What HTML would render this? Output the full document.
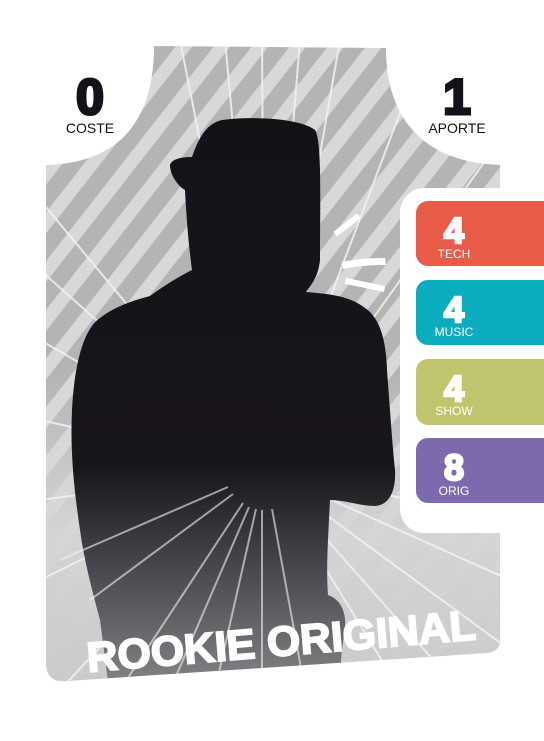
<!DOCTYPE html>
<html><head><meta charset="utf-8"><style>
html,body{margin:0;padding:0;background:#fff;width:544px;height:741px;overflow:hidden}
svg{display:block}
text{font-family:"Liberation Sans","DejaVu Sans",sans-serif}
</style></head><body>
<svg width="544" height="741" viewBox="0 0 544 741" xmlns="http://www.w3.org/2000/svg">
<defs>
<clipPath id="card">
<path d="M154,46 L386,48 C386,115 420,162 500,165 L500,640 Q500,652 486,653 L66,681 Q46,683 46,662 L46,165 C120,163 154,120 154,46 Z"/>
</clipPath>
<pattern id="stripes" patternUnits="userSpaceOnUse" width="30" height="30" patternTransform="rotate(38)">
<rect width="30" height="30" fill="#d8d8d8"/>
<rect width="17" height="30" fill="#b4b4b4"/>
</pattern>
<linearGradient id="fade" x1="0" y1="0" x2="0" y2="1">
<stop offset="0" stop-color="#d8d8d8" stop-opacity="0"/>
<stop offset="0.5" stop-color="#d8d8d8" stop-opacity="0"/>
<stop offset="0.72" stop-color="#d6d6d6" stop-opacity="0.95"/>
<stop offset="1" stop-color="#c6c6c6" stop-opacity="1"/>
</linearGradient>
<linearGradient id="body" x1="0" y1="0" x2="0" y2="1">
<stop offset="0" stop-color="#141118"/>
<stop offset="0.6" stop-color="#18151b"/>
<stop offset="1" stop-color="#8a898e"/>
</linearGradient>
</defs>
<g clip-path="url(#card)">
<rect x="0" y="0" width="544" height="741" fill="url(#stripes)"/>
<rect x="0" y="0" width="544" height="741" fill="url(#fade)"/>
<g stroke="#f2f2f2" stroke-width="2" opacity="0.85">
<line x1="265" y1="470" x2="180" y2="40"/>
<line x1="265" y1="470" x2="225" y2="40"/>
<line x1="265" y1="470" x2="262" y2="40"/>
<line x1="265" y1="470" x2="300" y2="40"/>
<line x1="265" y1="470" x2="340" y2="40"/>
<line x1="265" y1="470" x2="420" y2="60"/>
<line x1="265" y1="470" x2="500" y2="140"/>
<line x1="265" y1="470" x2="40" y2="200"/>
<line x1="265" y1="470" x2="40" y2="270"/>
<line x1="265" y1="470" x2="40" y2="340"/>
<line x1="265" y1="470" x2="40" y2="420"/>
<line x1="265" y1="470" x2="40" y2="500"/>
<line x1="265" y1="470" x2="40" y2="580"/>
<line x1="265" y1="470" x2="60" y2="690"/>
<line x1="265" y1="470" x2="120" y2="690"/>
<line x1="265" y1="470" x2="170" y2="690"/>
<line x1="265" y1="470" x2="215" y2="690"/>
<line x1="265" y1="470" x2="262" y2="690"/>
<line x1="265" y1="470" x2="305" y2="690"/>
<line x1="265" y1="470" x2="350" y2="690"/>
<line x1="265" y1="470" x2="400" y2="690"/>
<line x1="265" y1="470" x2="460" y2="690"/>
<line x1="265" y1="470" x2="510" y2="650"/>
<line x1="265" y1="470" x2="510" y2="580"/>
<line x1="265" y1="470" x2="510" y2="520"/>
</g>
<path fill="url(#body)" d="M222,120 C250,116 300,118 315,130 C322,140 320,200 320,260 C318,280 308,288 306,292 C330,294 350,296 365,308 C380,318 386,340 387,370 C390,410 392,440 395,470 C396,490 390,505 375,506 C360,506 345,500 330,500 C328,540 326,570 328,595 C342,600 348,615 344,635 C340,660 340,680 340,700 L110,700 C108,680 104,650 100,620 C92,590 84,560 80,530 C74,490 70,450 72,410 C74,370 82,330 100,318 C115,306 135,300 150,296 C165,285 180,276 192,270 C188,240 186,210 185,190 C178,186 170,175 170,165 C172,158 185,157 192,157 C198,140 205,124 222,120 Z"/>
<g stroke="#f2f2f2" stroke-width="2" opacity="0.6">
<line x1="243" y1="503" x2="120" y2="690"/>
<line x1="249" y1="507" x2="170" y2="690"/>
<line x1="256" y1="509" x2="215" y2="690"/>
<line x1="262" y1="510" x2="262" y2="690"/>
<line x1="272" y1="509" x2="305" y2="690"/>
<line x1="233" y1="494" x2="90" y2="600"/>
<line x1="228" y1="487" x2="60" y2="560"/>
</g>
<g fill="#fff">
<rect x="332" y="222" width="30" height="6" transform="rotate(-38 347 225)"/>
<path d="M342,262 Q360,258 385,258 L386,265 Q360,265 343,269 Z"/>
<rect x="345" y="282" width="40" height="6" transform="rotate(12 365 285)"/>
</g>
<text x="0" y="0" transform="translate(88,672) rotate(-4.8)" font-size="42" font-weight="bold" fill="#fff" stroke="#fff" stroke-width="1.8" textLength="390" lengthAdjust="spacingAndGlyphs">ROOKIE ORIGINAL</text>
</g>
<g fill="#141118" stroke="#141118">
<text x="90" y="114" text-anchor="middle" font-size="50" font-weight="bold" stroke-width="3">0</text>
<text x="457" y="114" text-anchor="middle" font-size="50" font-weight="bold" stroke-width="3">1</text>
</g>
<text x="90" y="133" text-anchor="middle" font-size="14" fill="#141118">COSTE</text>
<text x="457" y="133" text-anchor="middle" font-size="14" fill="#141118">APORTE</text>
<rect x="400" y="188" width="160" height="345" rx="24" fill="#fff"/>
<rect x="416" y="201" width="140" height="65" rx="12" fill="#e95a49"/>
<rect x="416" y="280" width="140" height="65" rx="12" fill="#0aacbf"/>
<rect x="416" y="359" width="140" height="66" rx="12" fill="#bfc46d"/>
<rect x="416" y="438" width="140" height="65" rx="12" fill="#7d6aac"/>
<g fill="#fff" text-anchor="middle">
<g stroke="#fff" stroke-width="2.5" font-weight="bold" font-size="36">
<text x="454" y="243">4</text>
<text x="454" y="322">4</text>
<text x="454" y="401">4</text>
<text x="454" y="480">8</text>
</g>
<text x="454" y="258" font-size="12">TECH</text>
<text x="454" y="336" font-size="12">MUSIC</text>
<text x="454" y="415" font-size="12">SHOW</text>
<text x="454" y="495" font-size="12">ORIG</text>
</g>
</svg>
</body></html>
